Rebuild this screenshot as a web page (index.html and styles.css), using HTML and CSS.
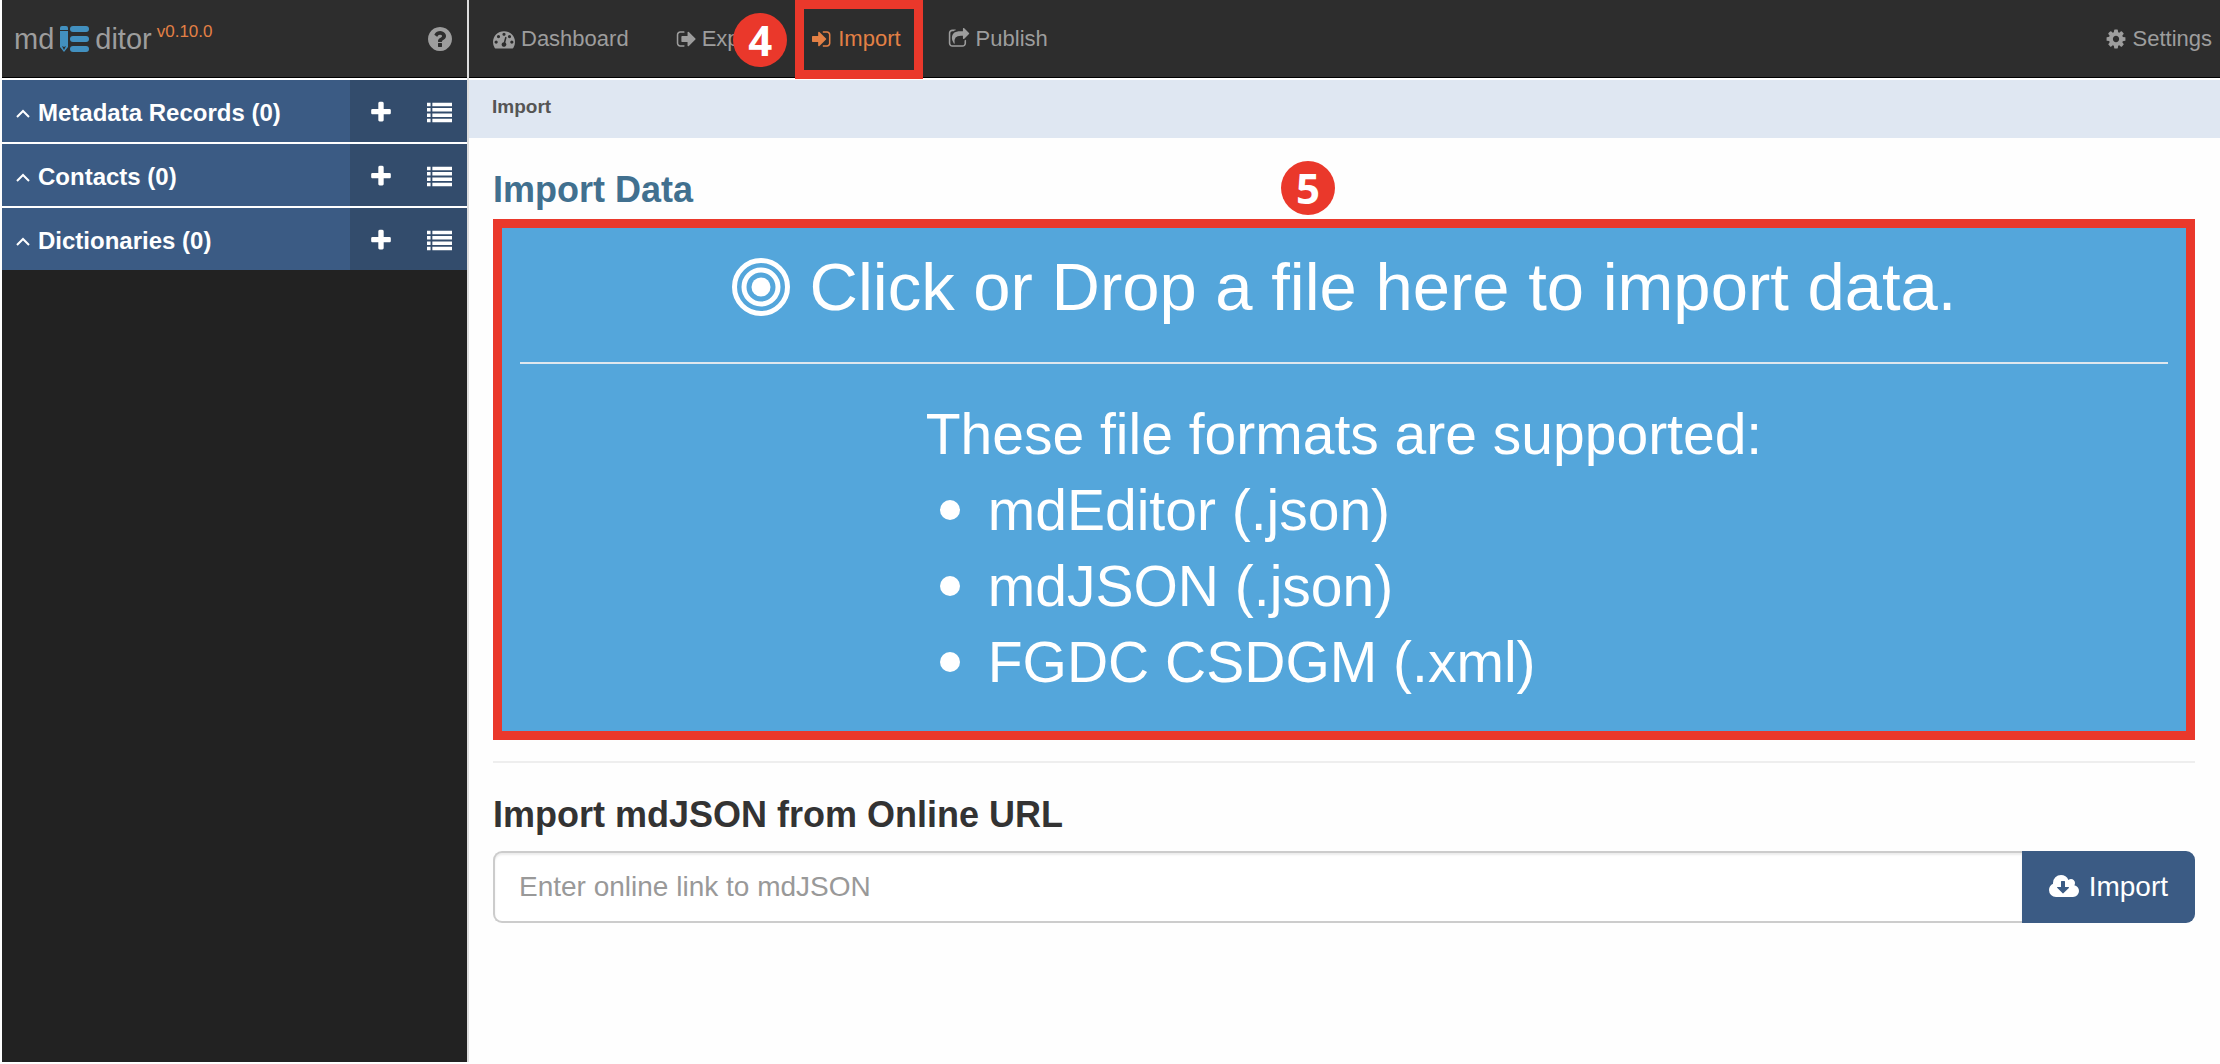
FILE: index.html
```html
<!DOCTYPE html>
<html lang="en">
<head>
<meta charset="utf-8">
<title>mdEditor - Import</title>
<link rel="stylesheet" href="styles.css">
</head>
<body>
<svg class="sprite" aria-hidden="true">
  <symbol id="plus" viewBox="192 0 1408 1792"><path d="M1600 736v192q0 40-28 68t-68 28h-416v416q0 40-28 68t-68 28h-192q-40 0-68-28t-28-68v-416h-416q-40 0-68-28t-28-68v-192q0-40 28-68t68-28h416v-416q0-40 28-68t68-28h192q40 0 68 28t28 68v416h416q40 0 68 28t28 68z"/></symbol>
  <symbol id="list" viewBox="0 0 1792 1792"><path d="M0 192h256v256H0zM384 192h1408v256H384zM0 576h256v256H0zM384 576h1408v256H384zM0 960h256v256H0zM384 960h1408v256H384zM0 1344h256v256H0zM384 1344h1408v256H384z"/></symbol>
  <symbol id="chevron" viewBox="0 0 14 14"><path d="M1 11l6-6 6 6" fill="none" stroke="currentColor" stroke-width="2"/></symbol>
</svg>
<aside class="sidebar">
  <header class="brand">
    <a class="logo" href="#">md<svg class="logo-mark" viewBox="0 0 29 27" aria-hidden="true"><path fill="#4290bf" d="M2 0h4a2 2 0 0 1 2 2v2H0V2a2 2 0 0 1 2-2zM0 5h8v16l-4 5-4-5z"/><path fill="#2d2d2d" d="M2 20l2 1 2-1-2 4z"/><rect x="10" y="0" width="19" height="6" rx="3" fill="#4290bf"/><rect x="10" y="10" width="19" height="6" rx="3" fill="#4290bf"/><rect x="10" y="20" width="19" height="6" rx="3" fill="#4290bf"/></svg>ditor<span class="version">v0.10.0</span></a>
    <button class="help" type="button" aria-label="Help"><svg viewBox="128 128 1536 1536"><path d="M1024 1376v-192q0-14-9-23t-23-9h-192q-14 0-23 9t-9 23v192q0 14 9 23t23 9h192q14 0 23-9t9-23zm256-672q0-88-55.5-163t-138.5-116-170-41q-243 0-371 213-15 24 8 42l132 100q7 6 19 6 16 0 25-12 53-68 86-92 34-24 86-24 48 0 85.5 26t37.5 59q0 38-20 61t-68 45q-63 28-115.5 86.5t-52.5 125.5v36q0 14 9 23t23 9h192q14 0 23-9t9-23q0-19 21.5-49.5t54.5-49.5q32-18 49-28.5t46-35 44.5-48 28-60.5 12.5-81zm384 192q0 209-103 385.5t-279.5 279.5-385.5 103-385.5-103-279.5-279.5-103-385.5 103-385.5 279.5-279.5 385.5-103 385.5 103 279.5 279.5 103 385.5z"/></svg></button>
  </header>
  <nav class="records" aria-label="Records">
    <div class="record-row">
      <a class="record-link" href="#"><svg class="chevron"><use href="#chevron"/></svg>Metadata Records (0)</a>
      <button class="action" type="button" aria-label="Add metadata record"><svg class="plus"><use href="#plus"/></svg></button>
      <button class="action" type="button" aria-label="List metadata records"><svg class="list"><use href="#list"/></svg></button>
    </div>
    <div class="record-row">
      <a class="record-link" href="#"><svg class="chevron"><use href="#chevron"/></svg>Contacts (0)</a>
      <button class="action" type="button" aria-label="Add contact"><svg class="plus"><use href="#plus"/></svg></button>
      <button class="action" type="button" aria-label="List contacts"><svg class="list"><use href="#list"/></svg></button>
    </div>
    <div class="record-row">
      <a class="record-link" href="#"><svg class="chevron"><use href="#chevron"/></svg>Dictionaries (0)</a>
      <button class="action" type="button" aria-label="Add dictionary"><svg class="plus"><use href="#plus"/></svg></button>
      <button class="action" type="button" aria-label="List dictionaries"><svg class="list"><use href="#list"/></svg></button>
    </div>
  </nav>
</aside>
<div class="page">
  <nav class="topbar" aria-label="Main">
    <a class="nav-link" href="#"><svg class="nav-icon" viewBox="0 0 1792 1792"><path d="M384 1152q0-53-37.5-90.5t-90.5-37.5-90.5 37.5-37.5 90.5 37.5 90.5 90.5 37.5 90.5-37.5 37.5-90.5zm192-448q0-53-37.5-90.5t-90.5-37.5-90.5 37.5-37.5 90.5 37.5 90.5 90.5 37.5 90.5-37.5 37.5-90.5zm428 481l101-382q6-26-7.5-48.5t-38.5-29.5-48 6.5-30 39.5l-101 382q-60 5-107 43.5t-63 98.5q-20 77 20 146t117 89 146-20 89-117q16-60-6-117t-72-91zm660-33q0-53-37.5-90.5t-90.5-37.5-90.5 37.5-37.5 90.5 37.5 90.5 90.5 37.5 90.5-37.5 37.5-90.5zm-640-640q0-53-37.5-90.5t-90.5-37.5-90.5 37.5-37.5 90.5 37.5 90.5 90.5 37.5 90.5-37.5 37.5-90.5zm448 192q0-53-37.5-90.5t-90.5-37.5-90.5 37.5-37.5 90.5 37.5 90.5 90.5 37.5 90.5-37.5 37.5-90.5zm320 448q0 261-141 483-19 29-54 29h-1402q-35 0-54-29-141-221-141-483 0-182 71-348t191-286 286-191 348-71 348 71 286 191 191 286 71 348z"/></svg>Dashboard</a>
    <a class="nav-link" href="#"><svg class="nav-icon narrow" viewBox="0 0 1664 1792"><path d="M704 1440q0 4 1 20t.5 26.5-3 23.5-10 19.5-20.5 6.5h-320q-119 0-203.500-84.500t-84.500-203.500v-704q0-119 84.500-203.500t203.500-84.500h320q13 0 22.500 9.500t9.500 22.500q0 4 1 20t.5 26.500-3 23.500-10 19.500-20.500 6.500h-320q-66 0-113 47t-47 113v704q0 66 47 113t113 47h312l11.500 1 11.500 3 8 5.500 7 9 2 13.500zm928-544q0 26-19 45l-544 544q-19 19-45 19t-45-19-19-45v-288h-448q-26 0-45-19t-19-45v-384q0-26 19-45t45-19h448v-288q0-26 19-45t45-19 45 19l544 544q19 19 19 45z"/></svg>Export</a>
    <a class="nav-link active" href="#"><svg class="nav-icon narrow" viewBox="128 0 1664 1792"><path d="M1312 896q0 26-19 45l-544 544q-19 19-45 19t-45-19-19-45v-288h-448q-26 0-45-19t-19-45v-384q0-26 19-45t45-19h448v-288q0-26 19-45t45-19 45 19l544 544q19 19 19 45zm352-352v704q0 119-84.500 203.500t-203.500 84.500h-320q-13 0-22.500-9.500t-9.500-22.500q0-4-1-20t-.5-26.500 3-23.500 10-19.500 20.500-6.500h320q66 0 113-47t47-113v-704q0-66-47-113t-113-47h-312l-11.500-1-11.500-3-8-5.500-7-9-2-13.500q0-4-1-20t-.5-26.500 3-23.500 10-19.500 20.500-6.500h320q119 0 203.500 84.500t84.500 203.500z"/></svg>Import<span class="outline"></span><span class="step step-nav">4</span></a>
    <a class="nav-link" href="#"><svg class="nav-icon" viewBox="0 0 1792 1792"><path d="M1472 989v259q0 119-84.500 203.500t-203.500 84.500h-832q-119 0-203.500-84.500t-84.500-203.500v-832q0-119 84.500-203.500t203.500-84.500h255q13 0 22.500 9.500t9.500 22.500q0 27-26 32-77 26-133 60-10 4-16 4h-112q-66 0-113 47t-47 113v832q0 66 47 113t113 47h832q66 0 113-47t47-113v-214q0-19 18-29 28-13 54-37 16-16 35-8 21 9 21 29zm237-496l-384 384q-18 19-45 19-12 0-25-5-39-17-39-59v-192h-160q-323 0-438 131-119 137-74 473 3 23-20 34-8 2-12 2-16 0-26-13-10-14-21-31t-39.500-68.500-49.500-99.500-38.500-114-17.500-122q0-49 3.500-91t14-90 28-88 47-81.500 68.500-74 94.500-61.500 124.500-48.500 159.500-30.500 196.500-11h160v-192q0-42 39-59 13-5 25-5 26 0 45 19l384 384q19 19 19 45t-19 45z"/></svg>Publish</a>
    <a class="nav-link settings" href="#"><svg class="nav-icon" viewBox="0 0 1792 1792"><path d="M1152 896q0-106-75-181t-181-75-181 75-75 181 75 181 181 75 181-75 75-181zm512-109v222q0 12-8 23t-20 13l-185 28q-19 54-39 91 35 50 107 138 10 12 10 25t-9 23q-27 37-99 108t-94 71q-12 0-26-9l-138-108q-44 23-91 38-16 136-29 186-7 28-36 28h-222q-14 0-24.500-8.500t-11.500-21.500l-28-184q-49-16-90-37l-141 107q-10 9-25 9-14 0-25-11-126-114-165-168-7-10-7-23 0-12 8-23 15-21 51-66.500t54-70.500q-27-50-41-99l-183-27q-13-2-21-12.500t-8-23.500v-222q0-12 8-23t19-13l186-28q14-46 39-92-40-57-107-138-10-12-10-24 0-10 9-23 26-36 98.500-107.500t94.500-71.500q13 0 26 10l138 107q44-23 91-38 16-136 29-186 7-28 36-28h222q14 0 24.500 8.500t11.500 21.500l28 184q49 16 90 37l142-107q9-9 24-9 13 0 25 10 129 119 165 170 7 8 7 22 0 12-8 23-15 21-51 66.500t-54 70.500q26 50 41 98l183 28q13 2 21 12.500t8 23.500z"/></svg>Settings</a>
  </nav>
  <div class="breadcrumb">Import</div>
  <main class="content">
    <h1 class="title">Import Data</h1>
    <section class="dropzone">
      <span class="step step-drop">5</span>
      <label class="drop-label" for="file"><svg class="target" viewBox="0 0 58 58" aria-hidden="true"><circle cx="29" cy="29" r="26.500" fill="none" stroke="currentColor" stroke-width="5"/><circle cx="29" cy="29" r="17" fill="none" stroke="currentColor" stroke-width="5"/><circle cx="29" cy="29" r="9.500" fill="currentColor"/></svg>Click or Drop a file here to import data.</label>
      <input class="file-input" id="file" type="file">
      <hr class="drop-rule">
      <div class="formats">
        <p>These file formats are supported:</p>
        <ul>
          <li>mdEditor (.json)</li>
          <li>mdJSON (.json)</li>
          <li>FGDC CSDGM (.xml)</li>
        </ul>
      </div>
    </section>
    <hr class="rule">
    <form class="url-form">
      <label class="url-label" for="url">Import mdJSON from Online URL</label>
      <div class="input-group">
        <input class="url-input" id="url" type="text" placeholder="Enter online link to mdJSON">
        <button class="import-button" type="button"><svg class="cloud" viewBox="64 0 1920 1792" aria-hidden="true"><path d="M1344 928q0-14-9-23t-23-9h-224v-352q0-13-9.500-22.500t-22.500-9.500h-192q-13 0-22.500 9.500t-9.500 22.500v352h-224q-13 0-22.500 9.500t-9.500 22.500q0 14 9 23l352 352q9 9 23 9t23-9l351-351q10-12 10-24zm640 224q0 159-112.500 271.500t-271.500 112.500h-1088q-185 0-316.500-131.500t-131.500-316.500q0-130 70-240t188-165q-2-30-2-43 0-212 150-362t362-150q156 0 285.500 87t188.500 231q71-62 166-62 106 0 181 75t75 181q0 76-41 138 130 31 213.500 135.500t83.500 238.500z"/></svg>Import</button>
      </div>
    </form>
  </main>
</div>
</body>
</html>
```
FILE: styles.css
```css
* {
  box-sizing: border-box;
}

body {
  margin: 0;
  padding: 0 0 2px 2px;
  min-height: 100vh;
  display: flex;
  background: #fefefe;
  color: #333;
  font-family: "Liberation Sans", Arial, sans-serif;
}

svg {
  fill: currentColor;
  flex: none;
}

a {
  color: inherit;
  text-decoration: none;
}

button {
  border: 0;
  padding: 0;
  font: inherit;
  background: none;
  color: inherit;
}

.sprite {
  position: absolute;
  width: 0;
  height: 0;
}

/* Sidebar */
.sidebar {
  flex: 0 0 467px;
  border-right: 2px solid #ddd;
  background: #222;
}

.brand,
.topbar {
  display: flex;
  align-items: center;
  height: 80px;
  border-bottom: 2px solid #fff;
  box-shadow: inset 0 -1px #000;
  background: #2d2d2d;
  color: #9d9d9d;
}

.brand {
  justify-content: space-between;
  padding: 0 15px 0 12px;
}

.logo {
  display: flex;
  align-items: center;
  font-size: 29px;
  line-height: 32px;
}

.logo-mark {
  width: 29px;
  height: 27px;
  margin: 0 6px;
}

.version {
  align-self: flex-start;
  margin-left: 5px;
  font-size: 17px;
  line-height: 18px;
  color: #e38045;
}

.help svg {
  display: block;
  width: 24px;
  height: 24px;
}

.record-row {
  display: flex;
  height: 64px;
  border-bottom: 2px solid #fff;
  background: #3b5b84;
  color: #fff;
}

.record-row:last-child {
  height: 62px;
  border-bottom: 0;
}

.record-link {
  flex: 1;
  display: flex;
  align-items: center;
  gap: 8px;
  padding: 4px 0 0 14px;
  font-size: 24px;
  font-weight: bold;
}

.chevron {
  width: 14px;
  height: 14px;
}

.action {
  flex: 0 0 58px;
  display: flex;
  align-items: center;
  justify-content: center;
  padding: 3px 0 0 3px;
  background: #334c6c;
}

.action + .action {
  flex-basis: 59px;
}

.plus {
  width: 20px;
  height: 25px;
}

.list {
  width: 25px;
  height: 25px;
}

/* Top bar */
.page {
  flex: 1;
  min-width: 0;
}

.topbar {
  gap: 47px;
  padding: 0 8px 0 24px;
  font-size: 22px;
}

.nav-link {
  position: relative;
  display: flex;
  align-items: center;
  gap: 6px;
}

.nav-icon {
  width: 22px;
  height: 22px;
}

.narrow {
  width: 20px;
}

.active {
  color: #e38045;
}

.settings {
  margin-left: auto;
}

/* Numbered callouts and red frames */
.outline {
  position: absolute;
  inset: -26px -22px -27px -17px;
  border: 9px solid #ea382b;
}

.step {
  position: absolute;
  width: 54px;
  height: 54px;
  border-radius: 50%;
  background: #ea382b;
  color: #fff;
  font: bold 42px/54px "Noto Sans", sans-serif;
  text-align: center;
}

.step-nav {
  top: -13px;
  left: -79px;
}

.step-drop {
  top: -67px;
  left: 779px;
}

/* Content */
.breadcrumb {
  height: 58px;
  padding: 0 23px;
  background: #dfe7f2;
  color: #555;
  font-size: 19px;
  font-weight: bold;
  line-height: 54px;
}

.content {
  padding: 32px 25px 0 24px;
}

.title {
  margin: 0 0 9px;
  color: #41708f;
  font-size: 36px;
  line-height: 40px;
}

.dropzone {
  position: relative;
  padding: 10px 18px 31px;
  border: 9px solid #ea382b;
  background: #54a6db;
  color: #fff;
}

.drop-label {
  display: flex;
  align-items: center;
  justify-content: center;
  gap: 20px;
  font-size: 67px;
  line-height: 98px;
}

.target {
  width: 58px;
  height: 58px;
}

.file-input {
  position: absolute;
  width: 1px;
  height: 1px;
  opacity: 0;
}

.drop-rule {
  height: 2px;
  margin: 26px 0 32px;
  border: 0;
  background: #dfe7ee;
}

.formats {
  width: fit-content;
  margin: 0 auto;
  font-size: 57px;
  line-height: 76px;
}

.formats p,
.formats ul {
  margin: 0;
  padding: 0;
}

.formats li {
  display: flex;
  align-items: center;
  gap: 28px;
  padding-left: 14px;
}

.formats li::before {
  content: "";
  width: 20px;
  height: 20px;
  border-radius: 50%;
  background: #fff;
}

.rule {
  height: 2px;
  margin: 21px 0 32px;
  border: 0;
  background: #eee;
}

.url-label {
  display: block;
  margin-bottom: 16px;
  font-size: 36px;
  font-weight: bold;
  line-height: 40px;
}

.input-group {
  display: flex;
  height: 72px;
}

.url-input {
  flex: 1;
  min-width: 0;
  padding: 0 24px;
  border: 2px solid #ccc;
  border-right: 0;
  border-radius: 9px 0 0 9px;
  background: #fff;
  box-shadow: inset 0 2px 2px rgba(0, 0, 0, 0.075);
  color: #555;
  font: inherit;
  font-size: 28px;
}

.url-input::placeholder {
  color: #999;
  opacity: 1;
}

.import-button {
  display: flex;
  align-items: center;
  gap: 10px;
  padding: 0 27px;
  border-radius: 0 9px 9px 0;
  background: #3b5b84;
  color: #fff;
  font-size: 28px;
}

.cloud {
  width: 30px;
  height: 28px;
}
```
